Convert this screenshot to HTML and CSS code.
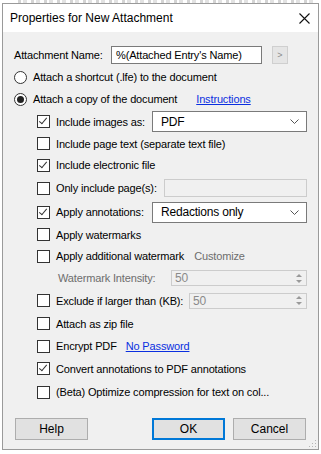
FILE: index.html
```html
<!DOCTYPE html>
<html lang="en">
<head>
  <meta charset="UTF-8" />
  <title>Properties for New Attachment</title>
  <link rel="stylesheet" href="styles.css">
</head>
<body>
  <div class="backdrop"></div>

  <div class="dialog">
    <div class="titlebar">
      <span class="title">Properties for New Attachment</span>
      <svg class="close" width="11" height="11" viewBox="0 0 11 11">
        <path d="M0.5 0.5 L10.5 10.5 M10.5 0.5 L0.5 10.5" stroke="#111" stroke-width="1.1" fill="none" />
      </svg>
    </div>

    <div class="content">
      <div class="row name-row">
        <span class="name-label">Attachment Name:</span>
        <div class="textbox name-box">%(Attached Entry's Name)</div>
        <div class="mini-btn">&gt;</div>
      </div>

      <div class="row">
        <span class="radio"></span>
        <span>Attach a shortcut (.lfe) to the document</span>
      </div>
      <div class="row">
        <span class="radio on"></span>
        <span>Attach a copy of the document</span>
        <a class="link link-instr" href="#">Instructions</a>
      </div>

      <div class="row sub h23">
        <span class="check on"></span>
        <span class="fixed-label">Include images as:</span>
        <div class="combo">PDF<svg width="9" height="5" viewBox="0 0 9 5"><polyline points="0.5,0.5 4.5,4.5 8.5,0.5" fill="none" stroke="#555" stroke-width="1" /></svg></div>
      </div>
      <div class="row sub h21">
        <span class="check"></span>
        <span>Include page text (separate text file)</span>
      </div>
      <div class="row sub">
        <span class="check on"></span>
        <span>Include electronic file</span>
      </div>
      <div class="row sub h24">
        <span class="check"></span>
        <span>Only include page(s):</span>
        <div class="textbox disabled pages-box"></div>
      </div>
      <div class="row sub h24">
        <span class="check on"></span>
        <span class="fixed-label">Apply annotations:</span>
        <div class="combo">Redactions only<svg width="9" height="5" viewBox="0 0 9 5"><polyline points="0.5,0.5 4.5,4.5 8.5,0.5" fill="none" stroke="#555" stroke-width="1" /></svg></div>
      </div>
      <div class="row sub h21">
        <span class="check"></span>
        <span>Apply watermarks</span>
      </div>
      <div class="row sub">
        <span class="check"></span>
        <span>Apply additional watermark</span>
        <span class="muted customize">Customize</span>
      </div>
      <div class="row sub">
        <span class="muted intensity">Watermark Intensity:</span>
        <div class="spinbox wi-box"><span>50</span><span class="spin"><i class="up"></i><i class="down"></i></span></div>
      </div>
      <div class="row sub h23">
        <span class="check"></span>
        <span>Exclude if larger than (KB):</span>
        <div class="spinbox ex-box"><span>50</span><span class="spin"><i class="up"></i><i class="down"></i></span></div>
      </div>
      <div class="row sub h23">
        <span class="check"></span>
        <span>Attach as zip file</span>
      </div>
      <div class="row sub">
        <span class="check"></span>
        <span>Encrypt PDF</span>
        <a class="link link-pw" href="#">No Password</a>
      </div>
      <div class="row sub h23">
        <span class="check on"></span>
        <span>Convert annotations to PDF annotations</span>
      </div>
      <div class="row sub h24">
        <span class="check"></span>
        <span>(Beta) Optimize compression for text on col...</span>
      </div>

      <div class="buttons">
        <div class="btn">Help</div>
        <div class="btn default">OK</div>
        <div class="btn">Cancel</div>
      </div>
    </div>
    <div class="grip"></div>
  </div>
</body>
</html>
```

FILE: styles.css
```css
body {
  margin: 0;
  background-color: #ffffff;
  font-family: 'Liberation Sans', Arial, sans-serif;
  font-size: 11px;
  color: #000000;
}
/* faint bits of the window behind the dialog */
.backdrop {
  height: 3px;
  margin: 0 6px 0 18px;
  background-image: repeating-linear-gradient(90deg, #d4d4d4 0 3px, transparent 3px 5px, #e2e2e2 5px 9px, transparent 9px 13px);
}
.dialog {
  position: relative;
  width: 315px;
  margin-left: 2px;
  border: 1px solid #9a9a9a;
}
.titlebar {
  height: 28px;
  background-color: #ffffff;
  display: flex;
  align-items: center;
  padding: 0 8px 0 7px;
}
.title {
  font-size: 12px;
  flex: 1;
}
.content {
  background-color: #f0f0f0;
  padding: 12px 11px 10px 11px;
  height: 395px;
  letter-spacing: -0.15px;
}
.row {
  height: 22px;
  display: flex;
  align-items: center;
  white-space: nowrap;
}
.row.h21 { height: 21px; }
.row.h23 { height: 23px; }
.row.h24 { height: 24px; }
.row.sub {
  padding-left: 23px;
}
.name-label {
  width: 97px;
}
.textbox {
  background-color: #ffffff;
  border: 1px solid #7a7a7a;
  box-sizing: border-box;
  height: 18px;
  line-height: 16px;
  padding-left: 4px;
}
.name-box {
  width: 151px;
}
.mini-btn {
  width: 16px;
  height: 18px;
  margin-left: 10px;
  box-sizing: border-box;
  border: 1px solid #cfcfcf;
  background-color: #e5e5e5;
  color: #8a8a8a;
  font-size: 9px;
  line-height: 16px;
  text-align: center;
  letter-spacing: 0;
}
.radio {
  width: 13px;
  height: 13px;
  box-sizing: border-box;
  border: 1px solid #333333;
  border-radius: 50%;
  background-color: #ffffff;
  margin-right: 6px;
  position: relative;
}
.radio.on::after {
  content: '';
  position: absolute;
  left: 2px;
  top: 2px;
  width: 7px;
  height: 7px;
  border-radius: 50%;
  background-color: #222222;
}
.check {
  width: 13px;
  height: 13px;
  box-sizing: border-box;
  border: 1px solid #333333;
  background-color: #ffffff;
  margin-right: 6px;
  position: relative;
}
.check.on::after {
  content: '';
  position: absolute;
  left: 3px;
  top: 0px;
  width: 3px;
  height: 7px;
  border-right: 1px solid #333333;
  border-bottom: 1px solid #333333;
  transform: rotate(40deg);
}
.link {
  color: #0a2fe0;
  text-decoration: underline;
}
.link-instr { margin-left: 19px; }
.link-pw { margin-left: 9px; }
.muted {
  color: #6d6d6d;
}
.customize { margin-left: 10px; }
.intensity { margin-left: 21px; }
.fixed-label {
  width: 95px;
}
.combo {
  margin-left: auto;
  width: 155px;
  height: 21px;
  box-sizing: border-box;
  border: 1px solid #7a7a7a;
  background-color: #ffffff;
  display: flex;
  align-items: center;
  justify-content: space-between;
  padding: 0 7px 0 8px;
  font-size: 12px;
  letter-spacing: -0.2px;
}
.textbox.disabled {
  background-color: #f0f0f0;
  border-color: #cccccc;
}
.pages-box {
  margin-left: auto;
  width: 143px;
}
.spinbox {
  margin-left: auto;
  height: 16px;
  box-sizing: border-box;
  border: 1px solid #cccccc;
  display: flex;
  justify-content: space-between;
  color: #8a8a8a;
  line-height: 14px;
  padding-left: 3px;
  font-size: 12px;
}
.wi-box { width: 136px; }
.ex-box { width: 118px; }
.spin {
  width: 15px;
  display: flex;
  flex-direction: column;
  justify-content: center;
  align-items: center;
  gap: 3px;
}
.spin i {
  width: 0;
  height: 0;
  border-left: 3px solid transparent;
  border-right: 3px solid transparent;
}
.spin .up { border-bottom: 3px solid #9a9a9a; }
.spin .down { border-top: 3px solid #9a9a9a; }
.buttons {
  display: flex;
  margin-top: 14px;
  padding-left: 1px;
  letter-spacing: 0;
}
.btn {
  width: 73px;
  height: 22px;
  box-sizing: border-box;
  border: 1px solid #adadad;
  background-color: #e1e1e1;
  text-align: center;
  line-height: 20px;
  font-size: 12px;
}
.btn.default {
  margin-left: 64px;
  border: 2px solid #0078d7;
  line-height: 18px;
}
.btn + .btn.default + .btn {
  margin-left: 8px;
}
.grip {
  position: absolute;
  right: 2px;
  bottom: 2px;
  width: 8px;
  height: 8px;
  background-image: radial-gradient(circle, #b5b5b5 0.8px, transparent 1px);
  background-size: 3px 3px;
  clip-path: polygon(100% 0, 100% 100%, 0 100%);
}
```
